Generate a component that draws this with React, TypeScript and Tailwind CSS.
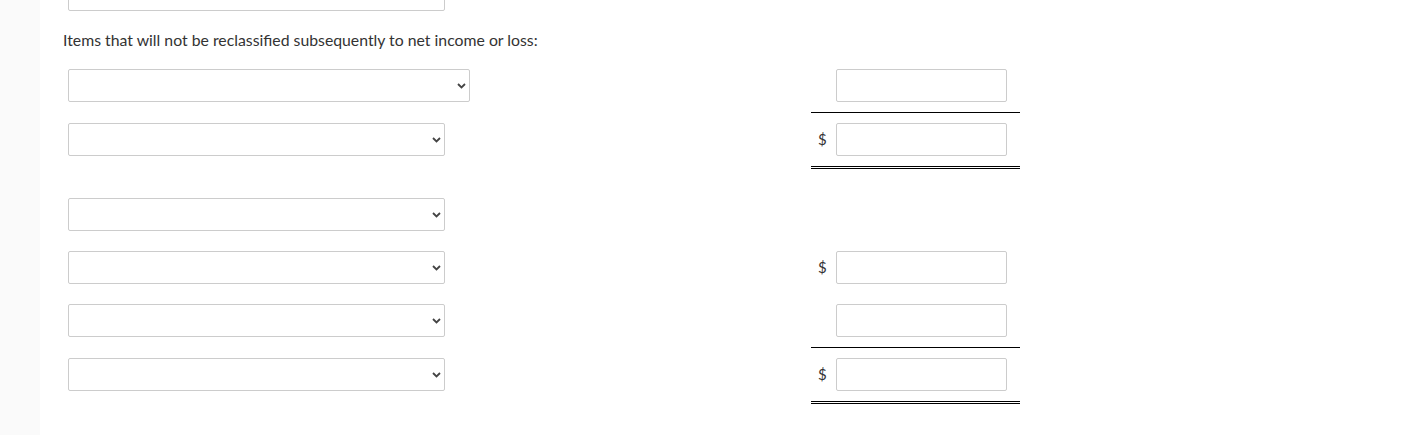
import React from "react";

const font = { fontFamily: "Lato, 'Noto Sans', sans-serif" };

function Chevron() {
  return (
    <svg
      className="pointer-events-none absolute right-[4px] top-1/2 -translate-y-1/2"
      width="9"
      height="6"
      viewBox="0 0 9 6"
    >
      <path d="M1 1 L4.5 4.5 L8 1" fill="none" stroke="#444" strokeWidth="1.8" />
    </svg>
  );
}

function Select({ wide }: { wide?: boolean }) {
  return (
    <div className={"relative h-[33px] " + (wide ? "w-[402px]" : "w-[377px]")}>
      <select className="h-full w-full appearance-none rounded-[2px] border border-[#cccccc] bg-white" />
      <Chevron />
    </div>
  );
}

type Line = "none" | "single" | "double";

function Amount({ dollar, line }: { dollar?: boolean; line: Line }) {
  const border =
    line === "single"
      ? "border-b border-black pb-[10px]"
      : line === "double"
        ? "border-b-[3px] border-double border-black pb-[10px]"
        : "";
  return (
    <div className={"flex w-[209px] items-center " + border}>
      <span className="w-[25px] pl-[7px] text-[15px] text-[#333]">{dollar ? "$" : ""}</span>
      <input className="h-[33px] w-[171px] rounded-[2px] border border-[#cccccc] bg-white" />
    </div>
  );
}

function Row({
  wide,
  amount,
  dollar,
  line = "none",
  className = "",
}: {
  wide?: boolean;
  amount?: boolean;
  dollar?: boolean;
  line?: Line;
  className?: string;
}) {
  return (
    <div className={"flex items-start " + className}>
      <div className="w-[743px]">
        <Select wide={wide} />
      </div>
      {amount && <Amount dollar={dollar} line={line} />}
    </div>
  );
}

export default function App() {
  return (
    <div className="flex h-[435px] w-full overflow-hidden bg-white" style={font}>
      <div className="w-[40px] shrink-0 bg-[#fafafa]" />
      <div className="flex flex-col pl-[28px]">
        <input className="-mt-[22px] h-[33px] w-[377px] rounded-[2px] border border-[#cccccc] bg-white" />
        <p className="-ml-[5px] mt-[19px] text-[15.8px] leading-[19px] text-[#333]">
          Items that will not be reclassified subsequently to net income or loss:
        </p>
        <Row wide amount line="single" className="mt-[20px]" />
        <Row amount dollar line="double" className="mt-[10px]" />
        <Row className="mt-[29px]" />
        <Row amount dollar className="mt-[20px]" />
        <Row amount line="single" className="mt-[20px]" />
        <Row amount dollar line="double" className="mt-[10px]" />
      </div>
    </div>
  );
}
